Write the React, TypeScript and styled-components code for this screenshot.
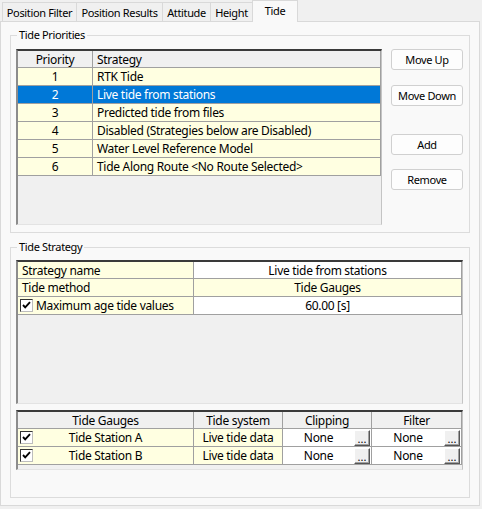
import React from "react";
import styled, { createGlobalStyle } from "styled-components";

const GlobalStyle = createGlobalStyle`
  html, body { margin: 0; padding: 0; background: #f0f0f0; }
  body {
    font-family: "Noto Sans", "Open Sans", sans-serif;
    color: #000;
    font-size: 12px;
    letter-spacing: -0.3px;
  }
  #root { width: 482px; height: 509px; }
`;

const Root = styled.div`
  width: 482px;
  height: 509px;
  overflow: hidden;
  display: flex;
  flex-direction: column;
  background: #f0f0f0;
`;

const TabStrip = styled.div`
  height: 21px;
  display: flex;
  align-items: flex-end;
  padding-left: 2px;
  position: relative;
  z-index: 1;
`;

const Tab = styled.div<{ $active?: boolean; $w: number }>`
  box-sizing: border-box;
  width: ${(p) => p.$w}px;
  height: ${(p) => (p.$active ? 22 : 19)}px;
  margin-bottom: ${(p) => (p.$active ? -1 : 0)}px;
  margin-right: -1px;
  border: 1px solid #d9d9d9;
  border-bottom: none;
  background: ${(p) => (p.$active ? "#f9f9f9" : "#f0f0f0")};
  display: flex;
  align-items: center;
  justify-content: center;
  padding-bottom: ${(p) => (p.$active ? 3 : 0)}px;
  font-size: 11px;
  letter-spacing: -0.35px;
  white-space: nowrap;
  position: relative;
  z-index: ${(p) => (p.$active ? 2 : 1)};
`;

const Panel = styled.div`
  box-sizing: border-box;
  width: 480px;
  flex: 1;
  margin-bottom: 3px;
  border: 1px solid #d9d9d9;
  background: #f9f9f9;
  padding: 13px 9px 0 9px;
  display: flex;
  flex-direction: column;
  gap: 14px;
`;

const GroupBox = styled.div<{ $pad: string }>`
  position: relative;
  border: 1px solid #dcdcdc;
  padding: ${(p) => p.$pad};
`;

const GroupTitle = styled.span`
  position: absolute;
  top: -8px;
  left: 6px;
  padding: 0 2px;
  line-height: 14px;
  background: #f9f9f9;
  font-size: 11px;
  letter-spacing: -0.35px;
`;

const GroupRow = styled.div`
  display: flex;
  gap: 9px;
`;

const GroupColumn = styled.div`
  display: flex;
  flex-direction: column;
  gap: 6px;
`;

const Frame = styled.div<{ $w: number; $h: number }>`
  box-sizing: border-box;
  width: ${(p) => p.$w}px;
  height: ${(p) => p.$h}px;
  background: #f0f0f0;
  border-top: 2px solid #3a3a3a;
  border-left: 2px solid #8c8c8c;
  border-right: 1px solid #c4c4c4;
  border-bottom: 1px solid #e3e3e3;
  overflow: hidden;
`;

const GridRow = styled.div<{ $cols: string; $h: number }>`
  display: grid;
  grid-template-columns: ${(p) => p.$cols};
  height: ${(p) => p.$h}px;
`;

type Align = "left" | "center";

const Cell = styled.div<{ $bg: string; $align?: Align; $sel?: boolean }>`
  box-sizing: border-box;
  border-right: 1px solid #a0a0a0;
  border-bottom: 1px solid #a0a0a0;
  background: ${(p) => (p.$sel ? "#0078d7" : p.$bg)};
  color: ${(p) => (p.$sel ? "#fff" : "#000")};
  display: flex;
  align-items: center;
  justify-content: ${(p) => (p.$align === "center" ? "center" : "flex-start")};
  padding: 0 ${(p) => (p.$align === "center" ? 0 : 3)}px 0
    ${(p) => (p.$align === "center" ? 0 : 4)}px;
  white-space: nowrap;
  overflow: hidden;
  min-width: 0;
`;

const CheckCell = styled(Cell)`
  display: grid;
  grid-template-columns: 13px 1fr 13px;
  padding: 0 2px;
  justify-content: stretch;
`;

const CheckLabel = styled.span`
  text-align: center;
`;

const PropCheckCell = styled(Cell)`
  gap: 3px;
  padding-left: 2px;
`;

const ButtonCell = styled(Cell)`
  padding: 0 1px 0 0;
`;

const ButtonCellText = styled.span`
  flex: 1;
  text-align: center;
`;

const EllipsisButton = styled.div`
  box-sizing: border-box;
  width: 16px;
  height: 16px;
  background: #f0f0f0;
  border: 1px solid;
  border-color: #ffffff #555555 #555555 #ffffff;
  box-shadow: inset -1px -1px 0 #a0a0a0;
  display: flex;
  align-items: flex-end;
  justify-content: center;
  font-size: 11px;
  line-height: 11px;
  letter-spacing: 0;
  padding-bottom: 1px;
`;

const CheckBoxBox = styled.span`
  box-sizing: border-box;
  width: 13px;
  height: 13px;
  background: #fff;
  border: 1px solid #333;
  border-right-color: #bdbdbd;
  border-bottom-color: #bdbdbd;
  display: flex;
  align-items: center;
  justify-content: center;
`;

const ButtonColumn = styled.div`
  display: flex;
  flex-direction: column;
  width: 72px;
`;

const PushButton = styled.button<{ $mt: number }>`
  box-sizing: border-box;
  width: 72px;
  height: 21px;
  margin-top: ${(p) => p.$mt}px;
  padding: 0;
  background: #fdfdfd;
  border: 1px solid #d0d0d0;
  border-radius: 3px;
  font-family: "Noto Sans", "Open Sans", sans-serif;
  font-size: 11px;
  letter-spacing: -0.35px;
  color: #000;
`;

const CheckBox = () => (
  <CheckBoxBox>
    <svg width="11" height="11" viewBox="0 0 11 11">
      <path d="M2 5 L4.2 7.3 L9 2.2" fill="none" stroke="#000" strokeWidth="1.9" />
    </svg>
  </CheckBoxBox>
);

const YELLOW = "#ffffe1";
const WHITE = "#ffffff";
const HEAD = "#f0f0f0";

const priorities = [
  "RTK Tide",
  "Live tide from stations",
  "Predicted tide from files",
  "Disabled (Strategies below are Disabled)",
  "Water Level Reference Model",
  "Tide Along Route <No Route Selected>",
];

const gauges = [
  { name: "Tide Station A", system: "Live tide data", clip: "None", filter: "None" },
  { name: "Tide Station B", system: "Live tide data", clip: "None", filter: "None" },
];

const tabs = [
  { label: "Position Filter", w: 75 },
  { label: "Position Results", w: 87 },
  { label: "Attitude", w: 49 },
  { label: "Height", w: 43 },
  { label: "Tide", w: 46, active: true },
];

const PRIO_COLS = "75px 288px";
const PROP_COLS = "176px 268px";
const GAUGE_COLS = "176px 89px 89px 90px";

export default function App() {
  return (
    <Root>
      <GlobalStyle />
      <TabStrip>
        {tabs.map((t) => (
          <Tab key={t.label} $w={t.w} $active={t.active}>
            {t.label}
          </Tab>
        ))}
      </TabStrip>
      <Panel>
        <GroupBox $pad="13px 6px 7px 5px">
          <GroupTitle>Tide Priorities</GroupTitle>
          <GroupRow>
            <Frame $w={366} $h={176}>
              <GridRow $cols={PRIO_COLS} $h={17}>
                <Cell $bg={HEAD} $align="center">Priority</Cell>
                <Cell $bg={HEAD}>Strategy</Cell>
              </GridRow>
              {priorities.map((s, i) => (
                <GridRow key={s} $cols={PRIO_COLS} $h={18}>
                  <Cell $bg={YELLOW} $align="center" $sel={i === 1}>
                    {i + 1}
                  </Cell>
                  <Cell $bg={YELLOW} $sel={i === 1}>
                    {s}
                  </Cell>
                </GridRow>
              ))}
            </Frame>
            <ButtonColumn>
              <PushButton $mt={0}>Move Up</PushButton>
              <PushButton $mt={15}>Move Down</PushButton>
              <PushButton $mt={28}>Add</PushButton>
              <PushButton $mt={14}>Remove</PushButton>
            </ButtonColumn>
          </GroupRow>
        </GroupBox>

        <GroupBox $pad="12px 6px 27px 5px">
          <GroupTitle>Tide Strategy</GroupTitle>
          <GroupColumn>
            <Frame $w={447} $h={144}>
              <GridRow $cols={PROP_COLS} $h={17}>
                <Cell $bg={YELLOW}>Strategy name</Cell>
                <Cell $bg={WHITE} $align="center">Live tide from stations</Cell>
              </GridRow>
              <GridRow $cols={PROP_COLS} $h={18}>
                <Cell $bg={YELLOW}>Tide method</Cell>
                <Cell $bg={YELLOW} $align="center">Tide Gauges</Cell>
              </GridRow>
              <GridRow $cols={PROP_COLS} $h={18}>
                <PropCheckCell $bg={YELLOW}>
                  <CheckBox />
                  <span>Maximum age tide values</span>
                </PropCheckCell>
                <Cell $bg={WHITE} $align="center">60.00 [s]</Cell>
              </GridRow>
            </Frame>
            <Frame $w={447} $h={60}>
              <GridRow $cols={GAUGE_COLS} $h={17}>
                <Cell $bg={HEAD} $align="center">Tide Gauges</Cell>
                <Cell $bg={HEAD} $align="center">Tide system</Cell>
                <Cell $bg={HEAD} $align="center">Clipping</Cell>
                <Cell $bg={HEAD} $align="center">Filter</Cell>
              </GridRow>
              {gauges.map((g) => (
                <GridRow key={g.name} $cols={GAUGE_COLS} $h={18}>
                  <CheckCell $bg={YELLOW}>
                    <CheckBox />
                    <CheckLabel>{g.name}</CheckLabel>
                    <span />
                  </CheckCell>
                  <Cell $bg={YELLOW} $align="center">{g.system}</Cell>
                  <ButtonCell $bg={WHITE}>
                    <ButtonCellText>{g.clip}</ButtonCellText>
                    <EllipsisButton>...</EllipsisButton>
                  </ButtonCell>
                  <ButtonCell $bg={WHITE}>
                    <ButtonCellText>{g.filter}</ButtonCellText>
                    <EllipsisButton>...</EllipsisButton>
                  </ButtonCell>
                </GridRow>
              ))}
            </Frame>
          </GroupColumn>
        </GroupBox>
      </Panel>
    </Root>
  );
}
